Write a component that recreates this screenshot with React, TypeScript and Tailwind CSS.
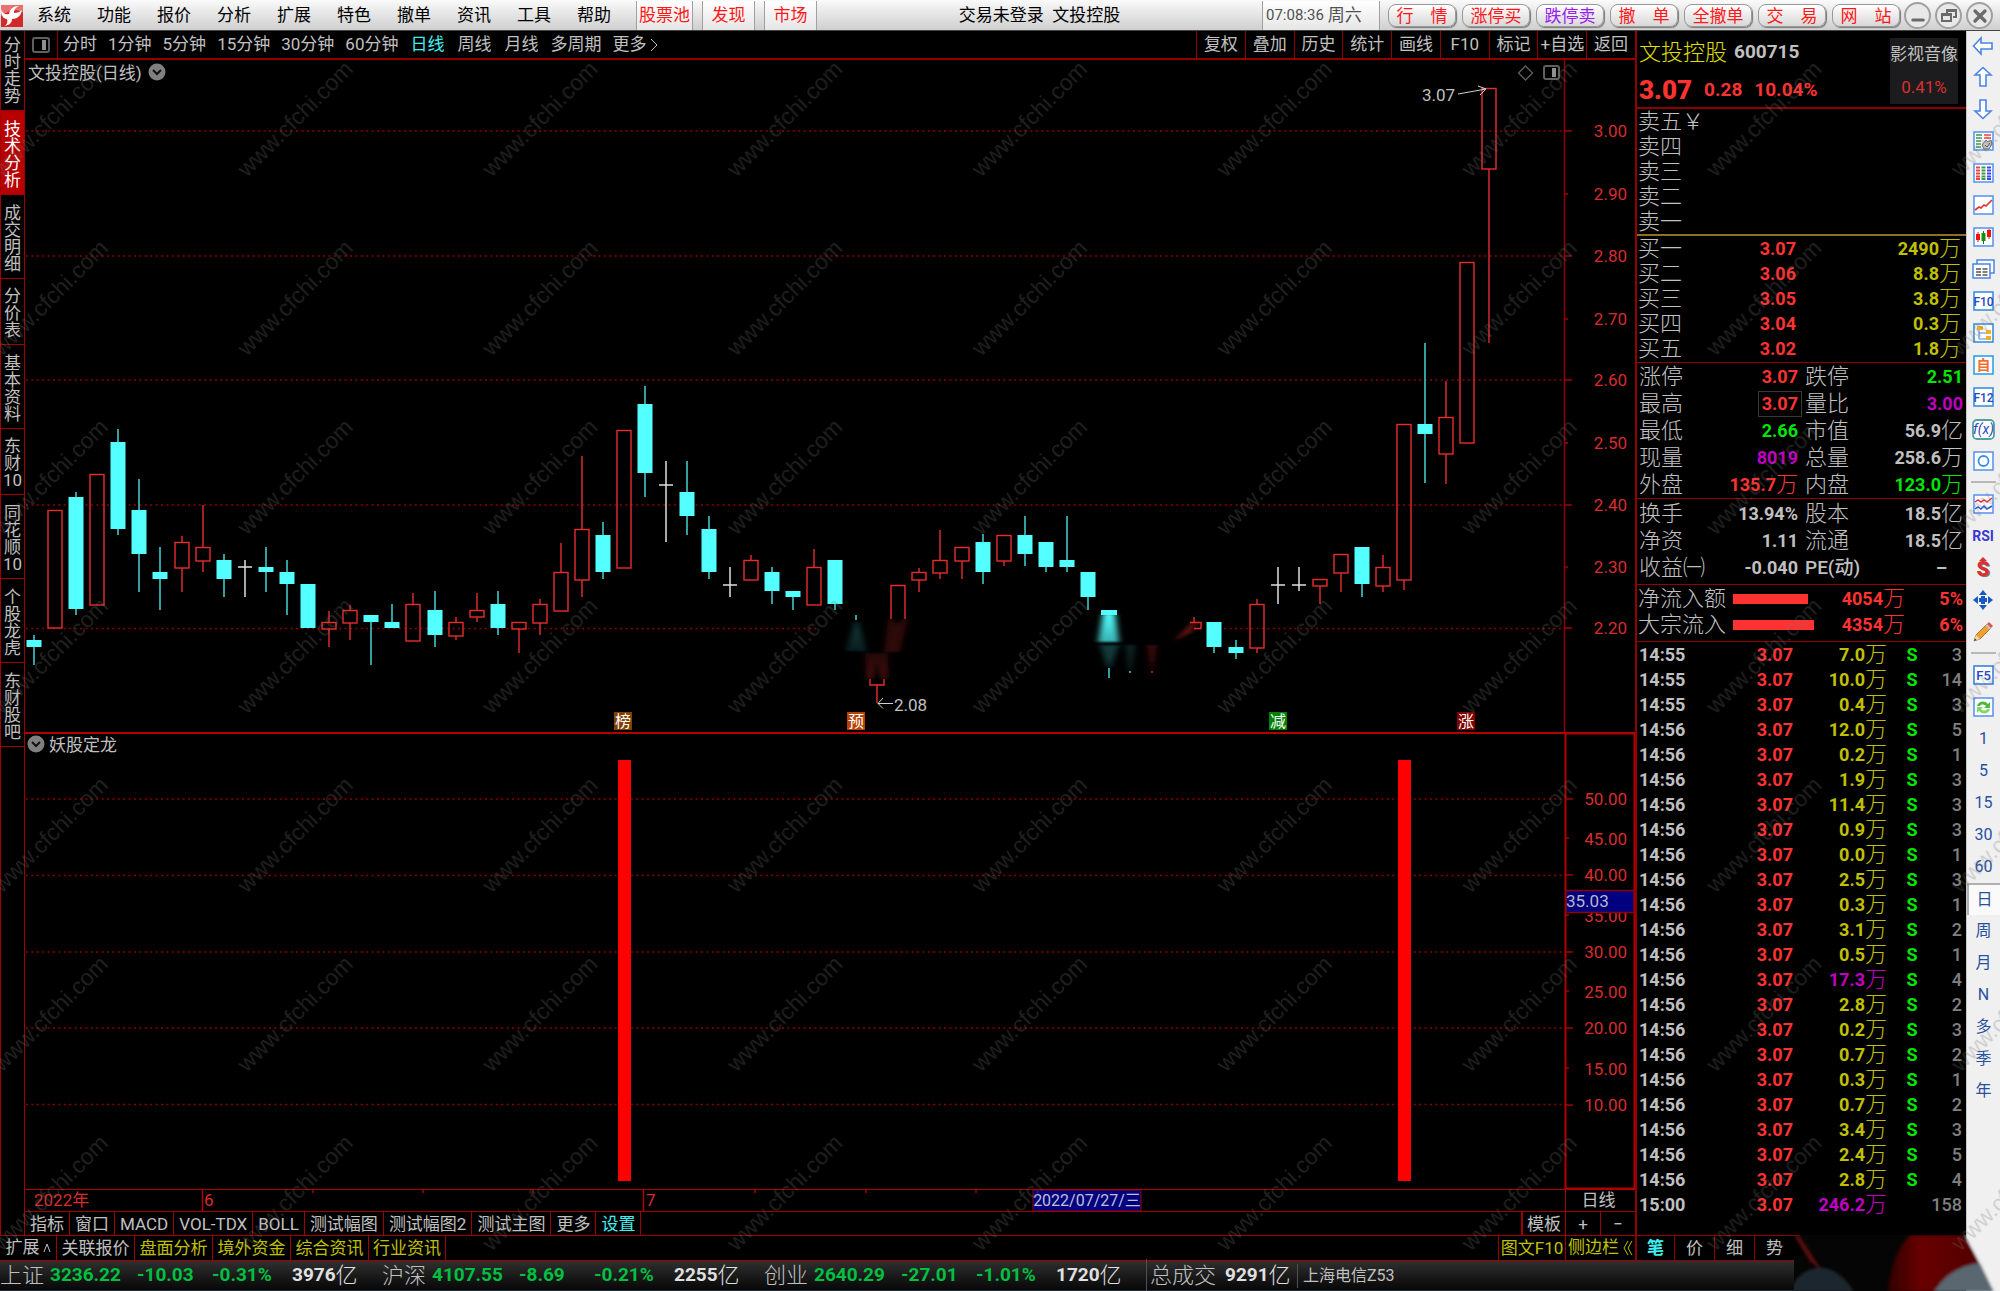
import {Fragment, ReactNode, useState} from "react";
import {Minus, X} from "lucide-react";
import clsx from "clsx";

const menus = ['系统', '功能', '报价', '分析', '扩展', '特色', '撤单', '资讯', '工具', '帮助'];
const hotMenus = ['股票池', '发现', '市场'];
const tradeButtons = ['行　情', '涨停买', '跌停卖', '撤　单', '全撤单', '交　易', '网　站'];
const sideTabs = ['分时走势', '技术分析', '成交明细', '分价表', '基本资料', '东财10', '同花顺10', '个股龙虎', '东财股吧'];
const periods = ['分时', '1分钟', '5分钟', '15分钟', '30分钟', '60分钟', '日线', '周线', '月线', '多周期'];
const chartTools = ['复权', '叠加', '历史', '统计', '画线', 'F10', '标记', '+自选', '返回'];
const indicatorTabs = ['指标', '窗口', 'MACD', 'VOL-TDX', 'BOLL', '测试幅图', '测试幅图2', '测试主图', '更多', '设置'];
const newsTabs = ['盘面分析', '境外资金', '综合资讯', '行业资讯'];

// kind, high, body top, body bottom, low
type Candle = ['u' | 'd' | 'x', number, number, number, number] | null;

const candles: Candle[] = [
    ['d', 635, 640, 647, 665], ['u', 510, 510, 628, 628], ['d', 492, 497, 609, 615], ['u', 474, 474, 605, 605],
    ['d', 429, 442, 529, 535], ['d', 479, 510, 554, 592], ['d', 547, 572, 579, 610], ['u', 536, 542, 568, 592],
    ['u', 505, 547, 561, 572], ['d', 554, 560, 579, 597], ['x', 560, 567, 567, 597], ['d', 547, 567, 572, 592],
    ['d', 560, 572, 584, 615], ['d', 584, 584, 628, 628], ['u', 611, 622, 629, 647], ['u', 605, 610, 623, 640],
    ['d', 615, 615, 622, 665], ['d', 604, 622, 628, 628], ['u', 593, 604, 641, 641], ['d', 591, 610, 635, 647],
    ['u', 617, 622, 636, 640], ['u', 593, 610, 617, 622], ['d', 591, 604, 628, 635], ['u', 622, 622, 629, 653],
    ['u', 599, 604, 623, 635], ['u', 543, 572, 611, 611], ['u', 456, 529, 580, 597], ['d', 522, 535, 572, 579],
    ['u', 430, 430, 568, 568], ['d', 386, 404, 473, 497], ['x', 461, 485, 485, 542], ['d', 461, 492, 516, 535],
    ['d', 516, 529, 572, 579], ['x', 567, 585, 585, 597], ['u', 555, 560, 580, 580], ['d', 567, 572, 591, 604],
    ['d', 591, 591, 597, 610], ['u', 549, 567, 605, 605], ['d', 560, 560, 604, 610], null,
    null, null, ['u', 568, 572, 580, 592], ['u', 530, 560, 573, 579],
    ['u', 547, 547, 561, 579], ['d', 534, 542, 572, 584], ['u', 535, 535, 561, 566], ['d', 516, 535, 554, 566],
    ['d', 542, 542, 567, 572], ['d', 516, 560, 567, 572], ['d', 572, 572, 597, 610], null,
    null, null, null, null,
    ['d', 622, 622, 647, 653], ['d', 640, 647, 653, 659], ['u', 599, 604, 648, 653], ['x', 567, 585, 585, 604],
    ['x', 567, 585, 585, 591], ['u', 579, 579, 586, 604], ['u', 554, 554, 573, 592], ['d', 547, 547, 584, 597],
    ['u', 555, 567, 586, 592], ['u', 424, 424, 580, 590], ['d', 343, 424, 434, 483], ['u', 381, 417, 454, 484],
    ['u', 262, 262, 443, 443], ['u', 88, 88, 169, 343],
];

const tags = [
    {x: 614, label: '榜', fill: '#804000'},
    {x: 847, label: '预', fill: '#b84000'},
    {x: 1269, label: '减', fill: '#008000'},
    {x: 1457, label: '涨', fill: '#800000'},
];

const priceAxis = [[3.0, 131], [2.9, 194], [2.8, 256], [2.7, 319], [2.6, 380], [2.5, 443], [2.4, 505], [2.3, 567], [2.2, 628]];
const indicatorAxis = [[50, 799], [45, 839], [40, 875], [35, 916], [30, 952], [25, 992], [20, 1028], [15, 1069], [10, 1105]];

const bids = [['买一', '3.07', '2490万'], ['买二', '3.06', '8.8万'], ['买三', '3.05', '3.8万'], ['买四', '3.04', '0.3万'], ['买五', '3.02', '1.8万']];

const red = 'text-[#ff3232]';
const green = 'text-[#00e600]';
const purple = 'text-[#c000c0]';
const gray = 'text-[#c0c0c0]';
const yellow = 'text-[#c0c000]';

const facts = [
    ['涨停', '3.07', red, '跌停', '2.51', green],
    ['最高', '3.07', red, '量比', '3.00', purple],
    ['最低', '2.66', green, '市值', '56.9亿', gray],
    ['现量', '8019', purple, '总量', '258.6万', gray],
    ['外盘', '135.7万', red, '内盘', '123.0万', green],
];
const finance = [
    ['换手', '13.94%', gray, '股本', '18.5亿', gray],
    ['净资', '1.11', gray, '流通', '18.5亿', gray],
    ['收益㈠', '-0.040', gray, 'PE(动)', '–', gray],
];

const ticks = [
    ['14:55', '7.0', '3'], ['14:55', '10.0', '14'], ['14:55', '0.4', '3'], ['14:56', '12.0', '5'], ['14:56', '0.2', '1'],
    ['14:56', '1.9', '3'], ['14:56', '11.4', '3'], ['14:56', '0.9', '3'], ['14:56', '0.0', '1'], ['14:56', '2.5', '3'],
    ['14:56', '0.3', '1'], ['14:56', '3.1', '2'], ['14:56', '0.5', '1'], ['14:56', '17.3', '4'], ['14:56', '2.8', '2'],
    ['14:56', '0.2', '3'], ['14:56', '0.7', '2'], ['14:56', '0.3', '1'], ['14:56', '0.7', '2'], ['14:56', '3.4', '3'],
    ['14:56', '2.4', '5'], ['14:56', '2.8', '4'], ['15:00', '246.2', '158'],
];

const indices = [
    ['上证', '3236.22', '-10.03', '-0.31%', '3976亿'],
    ['沪深', '4107.55', '-8.69', '-0.21%', '2255亿'],
    ['创业', '2640.29', '-27.01', '-1.01%', '1720亿'],
];

// digits are bold, the unit after them is not
function Amount({value}: { value: string }) {
    const unit = /[万亿]$/.test(value) ? value.slice(-1) : '';
    return (
        <>
            <b className="font-bold">{unit ? value.slice(0, -1) : value}</b>
            {unit && <span className="text-[22px] font-light">{unit}</span>}
        </>
    );
}

function Header() {
    return (
        <header className="flex h-[31px] shrink-0 items-center border-b border-[#444] bg-gradient-to-b from-[#fafafa] to-[#cfcfcf] pt-px text-[17px] text-black">
            <svg viewBox="0 0 24 24" className="h-6 w-6 shrink-0" aria-hidden="true">
                <rect x="1" y="1" width="22" height="22" fill="#d22a2a"/>
                <path d="M1 1h22v7C15 5 9 6 1 12z" fill="#e87070"/>
                <path d="M1 5c1 4 4 6 8 5 1-5 4-8 10-8-4 2-5 4-5 7 3 0 6-1 8-3-1 6-5 9-10 9 0 4-3 6-7 7 2-2 3-4 2-7-4 0-6-4-6-10z" fill="#fff"/>
            </svg>
            <nav className="flex">
                {menus.map(item => <button key={item} className="w-15 text-center">{item}</button>)}
            </nav>
            <div className="ml-3 flex gap-[9px] self-stretch text-[#ff1818]">
                {hotMenus.map(item => (
                    <button key={item}
                            className={clsx('border-x border-[#a0a0a0] bg-gradient-to-b from-white to-[#e6e6e6]', item.length > 2 ? 'w-[57px]' : 'w-[53px]')}>
                        {item}
                    </button>
                ))}
            </div>
            <h1 className="flex-1 text-center whitespace-pre">交易未登录  文投控股</h1>
            <div className="flex w-[118px] items-center gap-1 self-stretch border-x border-[#a0a0a0] bg-gradient-to-b from-white to-[#e6e6e6] pl-[3px] text-[#505050]">
                <span className="text-[15px]">07:08:36</span> 周六
            </div>
            <div className="ml-2 flex gap-[6px]">
                {tradeButtons.map((item, i) => (
                    <button key={item}
                            className={clsx('h-[23px] w-[68px] rounded-lg border border-[#999] bg-gradient-to-b from-white to-[#d8d8d8] text-center leading-[20px] shadow-[1px_1px_1px_#777]', i === 2 ? 'text-[#9a20f0]' : 'text-[#ff1818]')}>
                        {item}
                    </button>
                ))}
            </div>
            <div className="mr-[7px] ml-1 flex gap-1 text-[#6a6a6a]">
                {['最小化', '还原', '关闭'].map((name, i) => (
                    <button key={name} aria-label={name}
                            className="flex h-[27px] w-[27px] items-center justify-center rounded-full border-2 border-[#a0a0a0] bg-[#e8e8e8]">
                        {i === 0 && <Minus size={18} strokeWidth={4} className="translate-y-1"/>}
                        {i === 1 && (
                            <svg viewBox="0 0 16 16" className="h-4 w-4" fill="none" stroke="currentColor" strokeWidth="2">
                                <path d="M6 5V2h9v7h-3"/>
                                <rect x="1" y="6" width="9" height="7"/>
                                <path d="M1 7h9M6 3h9"/>
                            </svg>
                        )}
                        {i === 2 && <X size={20} strokeWidth={4}/>}
                    </button>
                ))}
            </div>
        </header>
    );
}

function SideTabs() {
    const [active, setActive] = useState('技术分析');
    return (
        <nav className="flex w-[25px] shrink-0 flex-col border-x border-[#a00000] text-[17px] leading-[17px] text-[#c0c0c0]">
            {sideTabs.map((tab, i) => (
                <button key={tab} onClick={() => setActive(tab)}
                        className={clsx('border-b border-[#a00000] break-all',
                            i === 0 ? 'h-20' : tab === '分价表' || tab === '东财10' ? 'h-[66px] pt-1' : 'h-[84px] pt-1',
                            active === tab && 'bg-[#b80000] text-white')}>
                    {tab}
                </button>
            ))}
        </nav>
    );
}

function PanelIcon() {
    return (
        <svg viewBox="0 0 18 16" className="h-4 w-[18px]" aria-hidden="true">
            <rect x="1" y="1" width="16" height="14" rx="2" fill="none" stroke="#606060" strokeWidth="2"/>
            <rect x="10" y="3" width="4" height="10" fill="#909090"/>
        </svg>
    );
}

function PeriodBar() {
    const [period, setPeriod] = useState('日线');
    return (
        <div className="flex h-[29px] items-stretch border-b-2 border-[#900000] text-[17px] text-[#c0c0c0]">
            <button aria-label="面板" className="flex w-[33px] items-center justify-center border-r border-[#900000]">
                <PanelIcon/>
            </button>
            <div className="flex flex-1 items-center gap-[11px] pl-[5px]">
                {periods.map(item => (
                    <button key={item} onClick={() => setPeriod(item)}
                            className={clsx(item.endsWith('线') && 'px-px', item === period && 'text-[#40f0f0]')}>{item}</button>
                ))}
                <button className="flex items-center gap-1">
                    更多
                    <svg viewBox="0 0 8 14" className="h-3.5 w-2" fill="none" stroke="currentColor">
                        <path d="M1 1l6 6-6 6"/>
                    </svg>
                </button>
            </div>
            <div className="grid w-[439px] grid-cols-9">
                {chartTools.map(item => (
                    <button key={item} className="border-l border-[#900000] text-center whitespace-nowrap">{item}</button>
                ))}
            </div>
        </div>
    );
}

function CircleChevron({x, y}: { x: number, y: number }) {
    return (
        <g>
            <circle cx={x} cy={y} r="8.5" fill="#808080"/>
            <path d={`M${x - 4} ${y - 2}l4 4 4-4`} fill="none" stroke="#111" strokeWidth="2"/>
        </g>
    );
}

function CandleShape({candle, x}: { candle: NonNullable<Candle>, x: number }) {
    const [kind, high, top, bottom, low] = candle;
    if (kind === 'x') {
        return <path d={`M${x} ${high}V${low}M${x - 7} ${top}h14`} stroke="#e0e0e0" strokeWidth="1.5"/>;
    }
    if (kind === 'd') {
        return (
            <g>
                <path d={`M${x} ${high}V${low}`} stroke="#40c8c8" strokeWidth="1.6"/>
                <rect x={x - 7.5} y={top} width="15" height={bottom - top} fill="#54ffff"/>
            </g>
        );
    }
    return (
        <g fill="none" stroke="#e82c2c" strokeWidth="1.4">
            <path d={`M${x} ${high}V${top}M${x} ${bottom}V${low}`}/>
            <rect x={x - 7} y={top + 0.5} width="14" height={bottom - top - 0.5}/>
        </g>
    );
}

function PriceChart() {
    return (
        <svg viewBox="25 60 1610 672" className="block w-full" fontSize="17">
            <defs>
                <linearGradient id="cyanFade" x1="0" y1="0" x2="0" y2="1">
                    <stop offset="0" stopColor="#40c8c8" stopOpacity=".3"/>
                    <stop offset="1" stopColor="#206060" stopOpacity=".3"/>
                </linearGradient>
                <linearGradient id="redFade" x1="0" y1="0" x2="0" y2="1">
                    <stop offset="0" stopColor="#801818" stopOpacity=".25"/>
                    <stop offset="1" stopColor="#a02020" stopOpacity=".6"/>
                </linearGradient>
                <linearGradient id="cyanBody" x1="0" y1="0" x2="0" y2="1">
                    <stop offset="0" stopColor="#54ffff"/>
                    <stop offset="1" stopColor="#38b0b0"/>
                </linearGradient>
                <filter id="soft" x="-5%" y="-30%" width="110%" height="160%">
                    <feGaussianBlur stdDeviation="3 1"/>
                </filter>
            </defs>
            <g stroke="#900000" strokeWidth="1.3" strokeDasharray="2 3.4">
                {[131, 256, 380, 505].map(y => <path key={y} d={`M26 ${y}H1564`}/>)}
                <path d="M26 628.5H818M1208 628.5H1564"/>
            </g>
            <path d="M1564.5 60V732" stroke="#900000" strokeWidth="1.5"/>
            {priceAxis.map(([price, y], i) => (
                <g key={price}>
                    <path d={`M1564 ${y}h${i % 2 ? 4 : 8}`} stroke="#a00000" strokeWidth="1.5"/>
                    <text x="1627" y={y + 6} textAnchor="end" fill="#d82c2c">{price.toFixed(2)}</text>
                </g>
            ))}

            {candles.map((candle, i) => candle && (
                <CandleShape key={i} candle={candle} x={Math.round(34 + 21.08 * i)}/>
            ))}

            {/* smeared stretch round the low */}
            <g filter="url(#soft)">
                <path d="M855 622h3l9 29h-21z" fill="url(#cyanFade)"/>
                <path d="M888 619h5l4 8 5-8h6l-8 33h-16z" fill="#801818" opacity=".35"/>
                <path d="M864 653h25l-3 26h-4l-5-20-5 20h-4z" fill="url(#redFade)"/>
                <path d="M1103 614h12l4 28h-21z" fill="url(#cyanBody)"/>
                <path d="M1100 645h19l-9 23h-2z" fill="#206060" opacity=".6"/>
                <path d="M1126 645h9l-4 27h-2z" fill="#206060" opacity=".4"/>
                <path d="M1147 645h10l-4 27h-2z" fill="#801818" opacity=".45"/>
                <path d="M1173 642l18-19h6l-5 9z" fill="#a02020" opacity=".6"/>
            </g>
            <rect x="1101" y="610" width="16" height="5" fill="#54ffff"/>
            <path d="M856 615v5M1109 668v10M1130 671v2" stroke="#40c8c8" strokeWidth="1.6"/>
            <path d="M891 619V585.5h14V619M870 679v6h14v-6M877 685v18M1152 671v2M1194 617v5M1190 622.5h11v6h-7" fill="none" stroke="#e82c2c" strokeWidth="1.4"/>

            <g fill="none" stroke="#d0d0d0">
                <path d="M1458 94l28-5M1478 86l8 3-6 6"/>
                <path d="M878 703.500h15M883 698l-5 5.500 5 5"/>
            </g>
            <g fill="#c0c0c0">
                <text x="1422" y="101">3.07</text>
                <text x="894" y="711">2.08</text>
                <text x="28" y="79">文投控股(日线)</text>
            </g>
            <CircleChevron x={157} y={72}/>
            <path d="M1525.500 66l7 7-7 7-7-7z" fill="none" stroke="#606060" strokeWidth="1.3"/>
            <rect x="1544" y="66" width="15" height="13" rx="2" fill="none" stroke="#606060" strokeWidth="2"/>
            <rect x="1552" y="68" width="4" height="9" fill="#909090"/>

            {tags.map(tag => (
                <g key={tag.label}>
                    <rect x={tag.x} y="712" width="18" height="18" fill={tag.fill}/>
                    <text x={tag.x + 9} y="727" textAnchor="middle" fill="#fff" fontSize="16">{tag.label}</text>
                </g>
            ))}
        </svg>
    );
}

function IndicatorChart() {
    return (
        <svg viewBox="25 732 1610 457" className="block w-full" fontSize="17">
            <path d="M25 733H1635" stroke="#b00000" strokeWidth="2"/>
            <g stroke="#900000" strokeWidth="1.3" strokeDasharray="2 3.4">
                {[799, 875.5, 952, 1028, 1104.5].map(y => <path key={y} d={`M26 ${y}H1564`}/>)}
            </g>
            {indicatorAxis.map(([value, y], i) => (
                <g key={value}>
                    <path d={`M1565 ${i % 2 ? y - 1 : y}h${i % 2 ? 4 : 8}`} stroke="#a00000" strokeWidth="1.5"/>
                    <text x="1627" y={y + 6} textAnchor="end" fill="#d82c2c">{value.toFixed(2)}</text>
                </g>
            ))}
            <rect x="1565.500" y="733.500" width="69" height="455" fill="none" stroke="#b00000" strokeWidth="2"/>
            <rect x="1566" y="890.500" width="68" height="22" fill="#000080" stroke="#900000" strokeWidth="1.5"/>
            <text x="1566" y="907" fill="#b8b8c8">35.03</text>
            <rect x="618" y="760" width="13" height="421" fill="#f00"/>
            <rect x="1398" y="760" width="13" height="421" fill="#f00"/>
            <CircleChevron x={36} y={744}/>
            <text x="49" y="751" fill="#c0c0c0">妖股定龙</text>
        </svg>
    );
}

function DateAxis() {
    return (
        <div className="flex h-[22px] border-t border-[#b00000]">
            <svg viewBox="25 1190 1540 21" className="block h-[21px] min-w-0 flex-1" fontSize="17">
                <path d="M202.500 1190v21M643.500 1190v21M313 1190v3M423 1190v3M533 1190v3M755 1190v3M866 1190v3M976 1190v3" stroke="#b00000" strokeWidth="1.5"/>
                <g fill="#d82c2c">
                    <text x="34" y="1206">2022年</text>
                    <text x="204" y="1206">6</text>
                    <text x="646" y="1206">7</text>
                </g>
                <rect x="1033" y="1190" width="108" height="21" fill="#000080" stroke="#900000"/>
                <text x="1087" y="1206" textAnchor="middle" fontSize="16" fill="#c0c0d0">2022/07/27/三</text>
            </svg>
            <div className="w-[70px] border-l border-[#a00000] pr-1 text-center leading-[21px]">日线</div>
        </div>
    );
}

function IndicatorTabs() {
    return (
        <div className="flex h-6 border-t border-[#a00000] whitespace-nowrap">
            {indicatorTabs.map(tab => (
                <button key={tab} className={clsx('border-r border-[#a00000] px-[5px]', tab === '设置' && 'text-[#40f0f0]')}>{tab}</button>
            ))}
            <div className="flex-1"/>
            <button className="w-[44px] border-l-2 border-[#a00000]">模板</button>
            <button className="w-[35px] border-l border-[#a00000]">+</button>
            <button className="w-[35px] border-l border-[#a00000]">−</button>
        </div>
    );
}

function NewsTabs() {
    return (
        <div className="flex h-[26px] border-y border-[#a00000] text-[17px] whitespace-nowrap text-[#c0c000]">
            <button className="flex w-14 items-center justify-center gap-[3px] text-[#c0c0c0]">
                扩展
                <svg viewBox="0 0 8 10" className="h-2.5 w-2" fill="none" stroke="currentColor"><path d="M1 9l3-8 3 8"/></svg>
            </button>
            <button className="w-[78px] border-l border-[#a00000] text-[#c0c0c0]">关联报价</button>
            {newsTabs.map((tab, i) => (
                <button key={tab} className={clsx('w-[78px] border-l border-[#a00000]', i === newsTabs.length - 1 && 'border-r')}>{tab}</button>
            ))}
            <div className="flex-1"/>
            <button className="w-[67px] border-l border-[#a00000]">图文F10</button>
            <button className="flex w-[70px] items-center justify-center gap-1 border-l border-[#a00000]">
                侧边栏
                <svg viewBox="0 0 10 16" className="h-4 w-2.5" fill="none" stroke="currentColor"><path d="M5 1L1 8l4 7M9 1L5 8l4 7"/></svg>
            </button>
        </div>
    );
}

function Facts({rows, className}: { rows: string[][], className?: string }) {
    return (
        <dl className={clsx('border-b border-[#900000] pr-[3px] pl-[2px]', className)}>
            {rows.map(([name, value, color, name2, value2, color2]) => (
                <div key={name} className="flex h-[27px] items-center leading-[24px] whitespace-nowrap">
                    <dt className="w-[68px] text-[22px] font-light">{name}</dt>
                    <dd className={clsx('flex w-[91px] items-center justify-end', color)}>
                        {name === '最高'
                            ? <b className="-mr-1 border border-[#383838] px-[3px]">{value}</b>
                            : <Amount value={value}/>}
                    </dd>
                    <dt className={clsx('ml-[7px]', name2.startsWith('PE') ? 'text-[19px] font-medium' : 'text-[22px] font-light')}>{name2}</dt>
                    <dd className={clsx('flex flex-1 items-center justify-end', color2, value2 === '–' && 'pr-4')}>
                        <Amount value={value2}/>
                    </dd>
                </div>
            ))}
        </dl>
    );
}

function QuotePanel() {
    return (
        <aside className="flex w-[331px] shrink-0 flex-col border-l-2 border-[#900000] text-[18px] text-[#c0c0c0]">
            <div className="flex h-[78px] justify-between border-b-2 border-[#900000] pr-2 pl-[2px]">
                <div>
                    <div className="flex h-[42px] items-center gap-[7px]">
                        <h2 className="text-[22px] font-light text-[#e0e000]">文投控股</h2>
                        <b className="text-[19px]">600715</b>
                    </div>
                    <div className={clsx('flex h-[34px] items-center gap-[12px] font-bold', red)}>
                        <span className="text-[26px] font-black">3.07</span>
                        <span className="text-[19px]">0.28</span>
                        <span className="text-[19px]">10.04%</span>
                    </div>
                </div>
                <div className="mt-[7px] flex h-[66px] w-[68px] flex-col items-center justify-around bg-[#1c1c1e] text-[17px] whitespace-nowrap">
                    <span>影视音像</span>
                    <span className="text-[#d83030]">0.41%</span>
                </div>
            </div>

            <div className="border-b-2 border-[#907020] pl-px text-[22px] leading-[25px] font-light">
                {['卖五￥', '卖四', '卖三', '卖二', '卖一'].map(name => <div key={name}>{name}</div>)}
            </div>
            <table className="w-full table-fixed leading-[24px]">
                <tbody>
                {bids.map(([name, price, volume]) => (
                    <tr key={name} className="h-[25px]">
                        <th className="w-[60px] p-0 pl-px text-left text-[22px] font-light">{name}</th>
                        <td className="w-[99px] p-0 text-right font-bold text-[#ff3232]">{price}</td>
                        <td className={yellow}>
                            <div className="flex items-center justify-end pr-[5px]"><Amount value={volume}/></div>
                        </td>
                    </tr>
                ))}
                </tbody>
            </table>
            <div className="h-[2px] border-b border-[#900000]"/>

            <Facts rows={facts}/>
            <Facts rows={finance} className="pt-px pb-[3px]"/>

            <div className="border-b border-[#900000] pt-px pb-[3px] pl-px">
                {[['净流入额', '4054万', '5%', 'w-[75px]'], ['大宗流入', '4354万', '6%', 'w-[81px]']].map(([name, value, share, bar]) => (
                    <div key={name} className={clsx('flex h-[26px] items-center pr-[3px] leading-[24px]', red)}>
                        <span className="w-[95px] text-[22px] font-light whitespace-nowrap text-[#c0c0c0]">{name}</span>
                        <span className={clsx('h-[10px] bg-[#ff3232]', bar)}/>
                        <span className="flex flex-1 items-center justify-end"><Amount value={value}/></span>
                        <b className="w-[58px] text-right">{share}</b>
                    </div>
                ))}
            </div>

            <table className="w-full table-fixed leading-[24px] font-bold">
                <tbody>
                {ticks.map(([time, volume, count], i) => (
                    <tr key={i} className="h-[25px]">
                        <td className="w-[60px] p-0 pl-[2px]">{time}</td>
                        <td className="w-[96px] p-0 text-right text-[#ff3232]">3.07</td>
                        <td className={clsx('w-[94px] p-0', Number(volume) > 15 ? purple : yellow)}>
                            <div className="flex items-center justify-end"><Amount value={volume + '万'}/></div>
                        </td>
                        <td className="w-[50px] p-0 text-center text-[#00e600]">{i < ticks.length - 1 && 'S'}</td>
                        <td className="p-0 pr-[4px] text-right font-medium text-[#808080]">
                            <div className="flex justify-end">{count}</div>
                        </td>
                    </tr>
                ))}
                </tbody>
            </table>
            <div className="flex-1"/>
            <div className="flex h-[26px] border-y border-[#900000] text-[17px]">
                {['笔', '价', '细', '势'].map((tab, i) => (
                    <button key={tab} className={clsx(i === 0 ? 'w-[37px] font-bold text-[#40f0f0]' : 'w-10 border-l border-[#900000]')}>{tab}</button>
                ))}
            </div>
        </aside>
    );
}

function StatusBar() {
    return (
        <footer className="flex h-[31px] items-center border-b-2 border-[#1c2c38] bg-gradient-to-b from-[#303030] to-[#080808] text-[19px] font-bold whitespace-nowrap text-[#00c040]">
            {indices.map(([name, price, change, percent, amount]) => (
                <Fragment key={name}>
                    <span className="w-[50px] text-[22px] font-light text-[#c0c0c0]">{name}</span>
                    <span className="w-[87px]">{price}</span>
                    <span className="w-[75px]">{change}</span>
                    <span className="w-20">{percent}</span>
                    <span className="flex w-[90px] items-center text-[#e0e0e0]"><Amount value={amount}/></span>
                </Fragment>
            ))}
            <span className="w-[79px] border-l border-[#505050] pl-[3px] text-[22px] font-light text-[#c0c0c0]">总成交</span>
            <span className="flex w-[72px] items-center text-[#e0e0e0]"><Amount value="9291亿"/></span>
            <span className="border-l border-[#505050] pl-[5px] text-[16px] font-normal text-[#c0c0c0]">上海电信Z53</span>
        </footer>
    );
}

function Boxed({children, stroke = '#5c98f0'}: { children: ReactNode, stroke?: string }) {
    return (
        <svg viewBox="0 0 21 20" className="h-5 w-[21px]">
            <rect x="1" y="1" width="19" height="18" fill="#fff" stroke={stroke} strokeWidth="1.6"/>
            {children}
        </svg>
    );
}

function Arrow({turn}: { turn: string }) {
    return (
        <svg viewBox="0 0 22 22" className={clsx('h-[22px] w-[22px]', turn)} fill="#fff" stroke="#4a84e8" strokeWidth="1.6">
            <path d="M1.500 11L9 3v5h11v6H9v5z"/>
        </svg>
    );
}

const toolIcons: ([string, ReactNode] | null)[] = [
    ['后退', <Arrow turn=""/>],
    ['上翻', <Arrow turn="rotate-90"/>],
    ['下翻', <Arrow turn="-rotate-90"/>],
    ['自选报价', (
        <Boxed>
            <path d="M3 4h6M3 7h6M3 10h5M3 13h5M3 16h5" stroke="#3a9a4a" strokeWidth="1.5"/>
            <path d="M11 4h7M11 7h7" stroke="#f04040" strokeWidth="1.500"/>
            <path d="M9 14l4-5 2 2 3-2 1 4-3 5h-5z" fill="#ccc" stroke="#666"/>
            <path d="M12 14l2 2 3-4" fill="none" stroke="#555"/>
        </Boxed>
    )],
    ['行情列表', (
        <Boxed>
            <path d="M3 4.500h4M3 7.500h4M3 10.500h4M3 13.500h4M3 16h4" stroke="#f04040" strokeWidth="1.8"/>
            <path d="M8.500 4.500h4M8.500 7.500h4M8.500 10.500h4M8.500 13.500h4M8.500 16h4" stroke="#3a9a4a" strokeWidth="1.8"/>
            <path d="M14 4.500h4M14 7.500h4M14 10.500h4M14 13.500h4M14 16h4" stroke="#4040f0" strokeWidth="1.8"/>
        </Boxed>
    )],
    ['走势图', <Boxed><path d="M2 15l4-3 2 1 3-3 2 1 6-6" fill="none" stroke="#e03030" strokeWidth="1.6"/></Boxed>],
    ['K线图', (
        <Boxed>
            <path d="M5 5v10M16 2v10" stroke="#e01010"/>
            <path d="M10.500 4v13" stroke="#108010"/>
            <path d="M3 7h4v6H3zM14 3h4v7h-4z" fill="#f01010"/>
            <path d="M8.500 6h4v8h-4z" fill="#109010"/>
        </Boxed>
    )],
    ['多窗口', (
        <svg viewBox="0 0 23 20" className="h-5 w-[23px]" fill="#fff" stroke="#4a84e8" strokeWidth="1.5">
            <path d="M5 1h17v13H5z"/>
            <path d="M1 5h17v14H1z"/>
            <path d="M4 10h5M4 13h5M4 16h5M10.500 10h5M10.500 13h5M10.500 16h5" stroke="#555"/>
        </svg>
    )],
    ['F10', <Boxed stroke="#3a90e0"><text x="10.500" y="15" textAnchor="middle" fontSize="12" fontWeight="500" fill="#2848c0">F10</text></Boxed>],
    ['分类', (
        <Boxed stroke="#3a90e0">
            <path d="M6 6v10h7M6 10h7" fill="none" stroke="#4a84e8"/>
            <path d="M4 3h6v4H4zM13 7h5v4h-5zM13 13h5v4h-5z" fill="#f0b020"/>
        </Boxed>
    )],
    ['自选股', <Boxed stroke="#30a0e8"><text x="10.500" y="15" textAnchor="middle" fontSize="14" fontWeight="700" fill="#f07030">自</text></Boxed>],
    ['F12', <Boxed stroke="#3a90e0"><text x="10.500" y="15" textAnchor="middle" fontSize="12" fontWeight="500" fill="#2848c0">F12</text></Boxed>],
    ['公式', (
        <svg viewBox="0 0 23 21" className="h-[21px] w-[23px]">
            <rect x="1" y="1" width="21" height="19" rx="4" fill="#fff" stroke="#50a0a0" strokeWidth="1.8"/>
            <text x="11.500" y="15" textAnchor="middle" fontSize="14" fontStyle="italic" fill="#2848c0">f(x)</text>
        </svg>
    )],
    ['区间', <Boxed><circle cx="10.500" cy="10" r="5" fill="none" stroke="#3a90e0" strokeWidth="1.8"/></Boxed>],
    null,
    ['叠加线', (
        <Boxed>
            <path d="M2 8l3-2 3 2 3-2 3 2 5-4" fill="none" stroke="#f03030" strokeWidth="1.5"/>
            <path d="M2 15l3-2 3 2 3-3 3 3 5-3" fill="none" stroke="#3050e0" strokeWidth="1.5"/>
        </Boxed>
    )],
    ['RSI', <b className="text-[14px] text-[#3838d0]">RSI</b>],
    ['资金', (
        <svg viewBox="0 0 20 22" className="h-[22px] w-5">
            <text x="11" y="20" textAnchor="middle" fontSize="21" fontWeight="900" fill="#777">S</text>
            <text x="10" y="19" textAnchor="middle" fontSize="21" fontWeight="900" fill="#d83030">S</text>
            <path d="M10 0l4 4H6z" fill="#d83030"/>
        </svg>
    )],
    ['移动', (
        <svg viewBox="0 0 20 20" className="h-5 w-5" fill="#1858c0">
            <path d="M10 0l4 5H6zM10 20l4-5H6zM0 10l5-4v8zM20 10l-5-4v8zM8 6h4v2h2v4h-2v2H8v-2H6V8h2z"/>
        </svg>
    )],
    ['画线', (
        <svg viewBox="0 0 20 20" className="h-5 w-5">
            <path d="M1 19l2-6L14 2l4 4L7 17z" fill="#f0a030" stroke="#a06020" strokeWidth=".8"/>
            <path d="M14 2l2-2 4 4-2 2z" fill="#e05050"/>
            <path d="M12.500 3.500l4 4 1.500-1.500-4-4z" fill="#c0c8d0"/>
            <path d="M1 19l2-6 4 4z" fill="#f0d8b0"/>
            <path d="M1 19l1-2.500L3.500 18z" fill="#333"/>
        </svg>
    )],
    null,
    ['F5', <Boxed stroke="#3a80e0"><text x="10.500" y="15" textAnchor="middle" fontSize="13" fontWeight="500" fill="#2848c0">F5</text></Boxed>],
    ['刷新', (
        <Boxed>
            <path d="M4 9c1-5 8-6 11-2l2-2v6h-6l2-2c-2-2-5-2-6 0z" fill="#50b840"/>
            <path d="M17 12c-1 5-8 6-11 2l-2 2v-6h6l-2 2c2 2 5 2 6 0z" fill="#80d860"/>
        </Boxed>
    )],
];
const shortPeriods = ['1', '5', '15', '30', '60', '日', '周', '月', 'N', '多', '季', '年'];

function ToolStrip() {
    return (
        <nav className="flex w-[34px] shrink-0 flex-col border-l border-[#c8c8c8] bg-[#f0f0f0] text-[16px] text-[#2850a0]">
            {toolIcons.map((tool, i) => tool ? (
                <button key={i} aria-label={tool[0]} title={tool[0]}
                        className={clsx('flex items-center justify-center pr-px', i === 0 ? 'h-[30px]' : 'h-8')}>
                    {tool[1]}
                </button>
            ) : (
                <hr key={i} className="mx-1 mt-1 mb-[5px] h-[2px] border-0 bg-[#b8b8b8]"/>
            ))}
            {shortPeriods.map(item => (
                <button key={item} className={clsx('h-8 text-center', item === '日' && 'border-t-2 border-l-2 border-[#b0b0b0] bg-[#fafafa]')}>{item}</button>
            ))}
        </nav>
    );
}

function Watermark() {
    return (
        <svg className="pointer-events-none absolute inset-0 h-full w-full" aria-hidden="true">
            <defs>
                <pattern id="mark" x="-8" y="60" width="244.800" height="179" patternUnits="userSpaceOnUse">
                    <text transform="translate(10 118) rotate(-45)" fontSize="23" fill="#737373" fillOpacity=".28" className="font-['Liberation_Sans',sans-serif]">www.cfchi.com</text>
                </pattern>
            </defs>
            <rect width="100%" height="100%" fill="url(#mark)"/>
        </svg>
    );
}

function CornerArt() {
    return (
        <svg viewBox="0 0 206 57" className="pointer-events-none absolute right-0 bottom-0 h-[57px] w-[206px]" aria-hidden="true">
            <defs>
                <filter id="cornerSoft" x="-10%" y="-10%" width="120%" height="120%">
                    <feGaussianBlur stdDeviation="1.500"/>
                </filter>
                <linearGradient id="cornerRed" x1="0" x2="1">
                    <stop offset="0" stopColor="#300000"/>
                    <stop offset=".35" stopColor="#680000"/>
                    <stop offset="1" stopColor="#500000"/>
                </linearGradient>
            </defs>
            <path d="M6 0H172V57H0V28l-2-6 12-2z" fill="#050505"/>
            <g filter="url(#cornerSoft)">
                <path d="M0 1h6l22 34-12-8z" fill="#500808"/>
                <path d="M-4 57c8-26 42-38 64 0z" fill="#1c262e"/>
                <path d="M116 0h54c8 14 14 24 18 34l-40 23H94c2-24 8-42 22-57z" fill="url(#cornerRed)"/>
                <path d="M172 0h34v57h-8L186 28z" fill="#f0f0f0"/>
                <path d="M140 57c10-16 24-26 46-29l14 29z" fill="#5a6670"/>
            </g>
        </svg>
    );
}

export default function App() {
    return (
        <div className="relative flex min-h-screen w-full flex-col overflow-hidden bg-black font-[Roboto,'Noto_Sans_CJK_SC',sans-serif] text-[#c0c0c0]">
            <Header/>
            <div className="flex flex-1">
                <div className="flex min-w-0 flex-1 flex-col">
                    <div className="flex flex-1">
                        <main className="flex min-w-0 flex-1 flex-col">
                            <div className="flex flex-1">
                                <SideTabs/>
                                <div className="min-w-0 flex-1 text-[17px]">
                                    <PeriodBar/>
                                    <PriceChart/>
                                    <IndicatorChart/>
                                    <DateAxis/>
                                    <IndicatorTabs/>
                                </div>
                            </div>
                            <NewsTabs/>
                        </main>
                        <QuotePanel/>
                    </div>
                    <StatusBar/>
                </div>
                <ToolStrip/>
            </div>
            <CornerArt/>
            <Watermark/>
        </div>
    );
}
